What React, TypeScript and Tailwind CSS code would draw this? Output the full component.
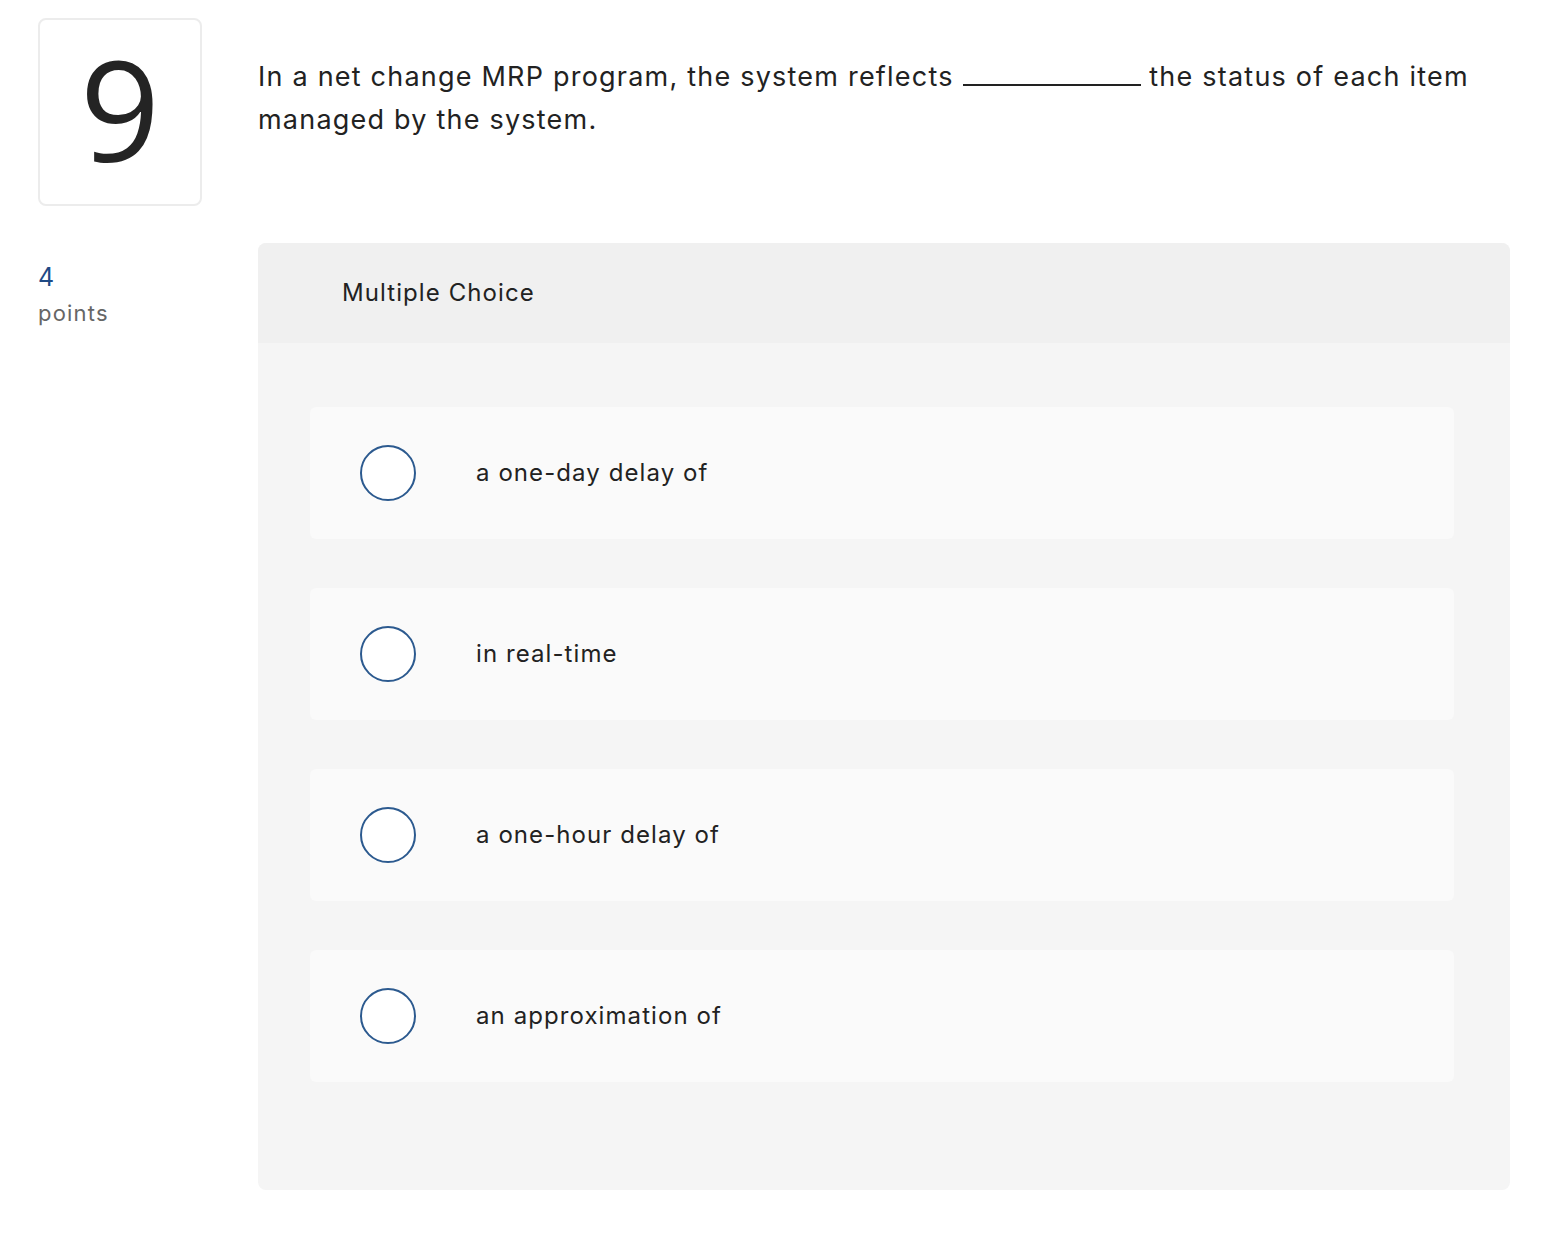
const options = [
  "a one-day delay of",
  "in real-time",
  "a one-hour delay of",
  "an approximation of",
];

export default function App() {
  return (
    <div className="min-h-screen bg-white text-[#222] tracking-[0.04em] font-['Inter','Liberation_Sans',sans-serif]">
      <div className="flex pt-[18px] pl-[38px] pr-[58px]">
        {/* Left column */}
        <div className="w-[220px] shrink-0">
          <div className="w-[164px] h-[188px] rounded-[8px] border-2 border-[#ececec] flex items-center justify-center">
            <span className="text-[140px] leading-none tracking-normal text-[#242424] -mt-[8px] font-['Open_Sans',sans-serif]">9</span>
          </div>
          <div className="mt-[56px]">
            <div className="text-[25px] leading-[30px] text-[#1f4a85]">4</div>
            <div className="text-[22px] leading-[30px] tracking-[0.055em] text-[#666] mt-[6px]">points</div>
          </div>
        </div>

        {/* Right column */}
        <div className="flex-1">
          <p className="text-[27px] leading-[43px] tracking-[0.045em] text-[#222] mt-[37px]">
            In a net change MRP program, the system reflects{" "}
            <span className="inline-block w-[178px] border-b-2 border-[#222] align-baseline"></span>{" "}
            the status of each item managed by the system.
          </p>

          <div className="mt-[102px] rounded-[8px] overflow-hidden bg-[#f5f5f5]">
            <div className="bg-[#f0f0f0] h-[100px] flex items-center pl-[84px]">
              <span className="text-[24px] tracking-[0.045em] text-[#222]">Multiple Choice</span>
            </div>
            <div className="pt-[64px] pb-[108px] pl-[52px] pr-[56px] flex flex-col gap-[49px]">
              {options.map((opt) => (
                <div
                  key={opt}
                  className="h-[132px] bg-[#fafafa] rounded-[6px] flex items-center pl-[50px]"
                >
                  <span className="w-[56px] h-[56px] rounded-full border-2 border-[#2c5a8f] bg-white shrink-0" />
                  <span className="ml-[60px] text-[24px] tracking-[0.045em] text-[#222]">{opt}</span>
                </div>
              ))}
            </div>
          </div>
        </div>
      </div>
    </div>
  );
}
